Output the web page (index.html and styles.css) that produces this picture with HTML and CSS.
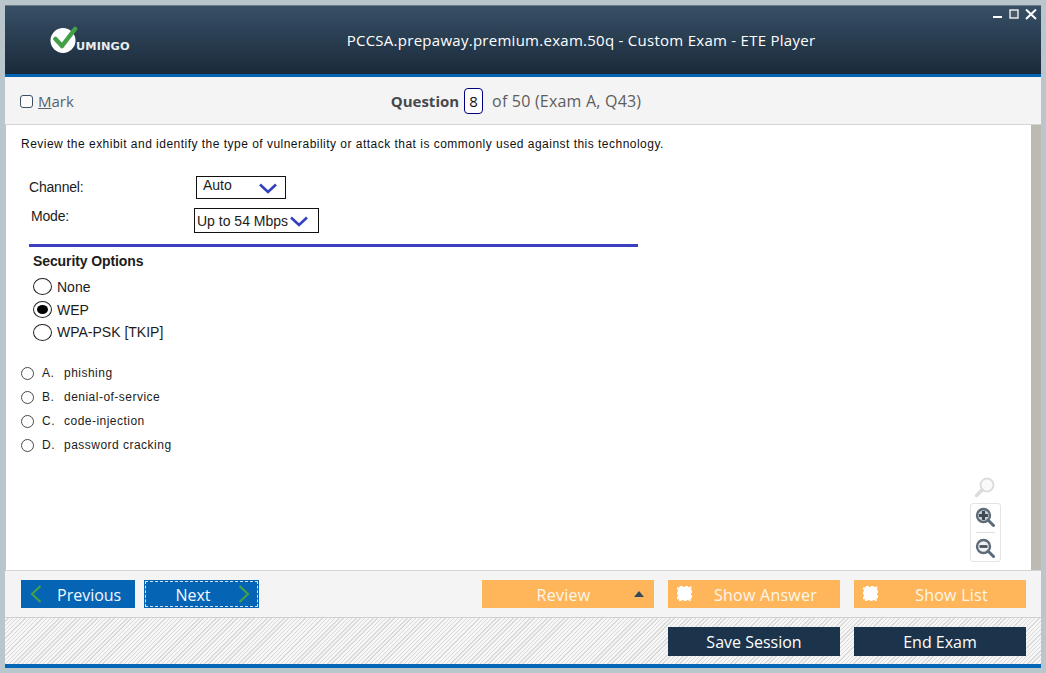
FILE: index.html
```html
<!DOCTYPE html>
<html lang="en">
<head>
<meta charset="utf-8">
<title>ETE Player</title>
<link rel="stylesheet" href="styles.css">
</head>
<body>
<div class="window">
  <header class="titlebar">
    <div class="logo">
      <svg class="logo-mark" width="28" height="28" viewBox="0 0 28 28"><circle cx="13" cy="15.500" r="12.500" fill="#fff"/><path d="M5.500 14 L12 21 L25 4" fill="none" stroke="#43a047" stroke-width="4.500" stroke-linecap="round" stroke-linejoin="round"/></svg>
      <span class="logo-text">UMINGO</span>
    </div>
    <div class="title">PCCSA.prepaway.premium.exam.50q - Custom Exam - ETE Player</div>
    <div class="winctl">
      <svg width="50" height="12" viewBox="0 0 50 12"><rect x="2" y="7" width="9" height="2" fill="#fff"/><rect x="19" y="1" width="8" height="8" fill="#4a5a6a" stroke="#e8e8e8" stroke-width="1.500"/><path d="M35 0.500 L45 10 M45 0.500 L35 10" stroke="#fff" stroke-width="2" fill="none"/></svg>
    </div>
  </header>

  <div class="markbar">
    <label class="mark"><span class="markbox"></span><span><u>M</u>ark</span></label>
    <div class="qnum"><b>Question</b><span class="qbox">8</span><span class="qrest">of 50 (Exam A, Q43)</span></div>
  </div>

  <main class="content">
    <div class="scroll">
      <p class="stem">Review the exhibit and identify the type of vulnerability or attack that is commonly used against this technology.</p>
      <div class="exhibit">
        <div class="ex-row ex-channel">
          <span class="ex-label">Channel:</span>
          <span class="ex-select ex-auto">Auto<svg class="chev" width="20" height="11" viewBox="0 0 20 11"><path d="M2 1.500 L10 9 L18 1.500" fill="none" stroke="#3340c0" stroke-width="2.600"/></svg></span>
        </div>
        <div class="ex-row ex-mode">
          <span class="ex-label">Mode:</span>
          <span class="ex-select ex-up">Up to 54 Mbps<svg class="chev" width="20" height="11" viewBox="0 0 20 11"><path d="M2 1.500 L10 9 L18 1.500" fill="none" stroke="#3340c0" stroke-width="2.600"/></svg></span>
        </div>
        <div class="ex-rule"></div>
        <div class="ex-head">Security Options</div>
        <div class="ex-radios">
          <div class="ex-radio"><span class="ex-dot"></span>None</div>
          <div class="ex-radio"><span class="ex-dot on"></span>WEP</div>
          <div class="ex-radio ex-last"><span class="ex-dot"></span>WPA-PSK [TKIP]</div>
        </div>
      </div>
      <ul class="answers">
        <li><span class="rb"></span><span class="let">A.</span>phishing</li>
        <li><span class="rb"></span><span class="let">B.</span>denial-of-service</li>
        <li><span class="rb"></span><span class="let">C.</span>code-injection</li>
        <li><span class="rb"></span><span class="let">D.</span>password cracking</li>
      </ul>
    </div>
    <div class="zoomtools">
      <svg class="zoom-off" width="22" height="22" viewBox="0 0 22 22"><circle cx="13" cy="9" r="6.500" fill="#fafafa" stroke="#dcdcdc" stroke-width="2"/><path d="M8 14 L2.500 19.500" stroke="#dcdcdc" stroke-width="3.500" stroke-linecap="round"/></svg>
      <div class="zoom-box">
        <svg width="20" height="20" viewBox="0 0 20 20"><circle cx="8.500" cy="8.500" r="6.500" fill="#cfd4d8" stroke="#5d6b78" stroke-width="2.400"/><path d="M13 13 L18.500 18.500" stroke="#5d6b78" stroke-width="3" stroke-linecap="round"/><path d="M4 8.500 H13 M8.500 4 V13" stroke="#3f4a55" stroke-width="3.200"/></svg>
        <i class="zoom-sep"></i>
        <svg width="20" height="20" viewBox="0 0 20 20"><circle cx="8.500" cy="8.500" r="6.500" fill="#eef0f1" stroke="#5d6b78" stroke-width="2.400"/><path d="M13 13 L18.500 18.500" stroke="#5d6b78" stroke-width="3" stroke-linecap="round"/><path d="M4.500 8.500 H12.500" stroke="#47535f" stroke-width="2.800"/></svg>
      </div>
    </div>
    <div class="scrollbar"></div>
  </main>

  <div class="toolbar">
    <div class="nav">
      <button class="btn blue prev"><svg width="12" height="18" viewBox="0 0 12 18"><path d="M10.500 1 L2 9 L10.500 17" fill="none" stroke="#43a047" stroke-width="2.200"/></svg><span>Previous</span></button>
      <button class="btn blue next"><span>Next</span><svg width="12" height="18" viewBox="0 0 12 18"><path d="M1.500 1 L10 9 L1.500 17" fill="none" stroke="#43a047" stroke-width="2.200"/></svg></button>
    </div>
    <div class="actions">
      <button class="btn orange wide review"><span>Review</span><i class="tri"></i></button>
      <button class="btn orange wide check"><i class="cb"></i><span>Show Answer</span></button>
      <button class="btn orange wide check"><i class="cb"></i><span>Show List</span></button>
    </div>
  </div>

  <div class="sessionbar">
    <button class="btn navy wide">Save Session</button>
    <button class="btn navy wide">End Exam</button>
  </div>
</div>
</body>
</html>
```
FILE: styles.css
```css
* { box-sizing: border-box; }
html, body { margin: 0; height: 100%; }
body {
  width: 1046px;
  height: 673px;
  overflow: hidden;
  background: #b9c7cd;
  padding: 5px 5px 4px 5px;
  font-family: "Liberation Sans", Arial, sans-serif;
}
.window {
  width: 1036px;
  height: 663px;
  display: flex;
  flex-direction: column;
  background: #fff;
}
.titlebar {
  height: 72px;
  flex: none;
  display: flex;
  align-items: flex-start;
  position: relative;
  background: linear-gradient(#384f66, #1a2a3a);
  border-top: 1px solid #6d7b85;
  border-bottom: 3px solid #0563b4;
  color: #fff;
}
.logo {
  position: absolute;
  left: 45px;
  top: 19px;
  display: flex;
  align-items: flex-end;
}
.logo-mark { display: block; }
.logo-text {
  margin-left: -2px;
  margin-bottom: 1px;
  font: bold 10px/10px "DejaVu Sans", sans-serif;
  letter-spacing: 0.1px;
  color: #e8edf0;
  transform: scaleX(1.13);
  transform-origin: left;
}
.title {
  width: 100%;
  text-align: center;
  margin-top: 25px;
  font: 15px/18px "Open Sans", sans-serif;
  letter-spacing: 0.27px;
  padding-left: 116px;
}
.winctl { position: absolute; right: 0; top: 3px; line-height: 0; }
.markbar {
  height: 48px;
  flex: none;
  display: flex;
  align-items: center;
  justify-content: center;
  position: relative;
  background: #f4f4f4;
  border-bottom: 1px solid #d4d4d4;
  color: #4f5760;
  font: 16px/20px "Open Sans", sans-serif;
}
.mark {
  position: absolute;
  left: 15px;
  top: 14px;
  display: flex;
  align-items: center;
  gap: 5px;
  font-size: 15px;
  color: #56626e;
}
.markbox {
  width: 13px;
  height: 13px;
  border: 1px solid #3c4f63;
  border-radius: 3px;
  background: #fbfbfb;
}
.qnum { display: flex; align-items: center; margin-right: 14px; color: #5d5d5d; }
.qnum b { color: #45494e; font-weight: 700; font-size: 15px; }
.qrest { letter-spacing: 0.2px; }
.qbox {
  width: 19px;
  height: 26px;
  margin: 0 9px 0 5px;
  border: 1px solid #000080;
  border-radius: 4px;
  background: #fff;
  color: #111;
  text-align: center;
  line-height: 24px;
  font-size: 15px;
}
.content {
  height: 445px;
  flex: none;
  display: flex;
  position: relative;
  border-left: 1px solid #b9c7cd;
}
.scroll { flex: 1; padding: 12px 0 0 15px; color: #111; }
.scrollbar { width: 10px; background: #bdbab4; }
.stem { margin: 0; font-size: 12px; line-height: 14px; letter-spacing: 0.48px; }
.exhibit { width: 622px; padding: 25px 0 0 8px; font-size: 14px; color: #1c1c1c; }
.ex-row { display: flex; }
.ex-channel { height: 22px; }
.ex-mode { height: 36px; margin-top: 10px; }
.ex-label { line-height: 15px; letter-spacing: -0.2px; }
.ex-channel .ex-label { width: 167px; padding-top: 4px; }
.ex-mode .ex-label { width: 165px; padding-left: 2px; padding-top: 1px; }
.ex-select {
  display: flex;
  align-items: center;
  border: 1px solid #111;
  background: #fff;
}
.ex-auto { width: 90px; height: 23px; padding: 0 0 5px 6px; }
.ex-auto .chev { margin-left: 26px; margin-top: 7px; }
.ex-up { width: 125px; height: 25px; padding-left: 2px; }
.ex-up .chev { margin-left: 1px; margin-top: 1px; }
.ex-rule { height: 3px; width: 609px; margin-top: 0; background: #3a40c0; }
.ex-head { font-weight: 700; margin: 6px 0 0 4px; line-height: 16px; letter-spacing: -0.1px; }
.ex-radios { margin-top: 6px; }
.ex-radio { display: flex; align-items: center; margin-left: 4px; height: 23px; line-height: 16px; gap: 5px; }
.ex-last { height: 22px; }
.ex-dot {
  width: 19px;
  height: 17px;
  border: 1px solid #222;
  border-radius: 50%;
  background: #fff;
  position: relative;
  flex: none;
}
.ex-dot.on::after {
  content: "";
  position: absolute;
  left: 3px;
  top: 3px;
  width: 11px;
  height: 9px;
  border-radius: 50%;
  background: #000;
}
.answers { list-style: none; margin: 18px 0 0; padding: 0; font-size: 12px; color: #1c1c1c; }
.answers li { display: flex; align-items: center; height: 24px; letter-spacing: 0.48px; }
.rb {
  width: 13px;
  height: 13px;
  border: 1px solid #4a4a4a;
  border-radius: 50%;
  background: #fff;
  margin-right: 8px;
}
.let { width: 22px; }
.zoomtools {
  position: absolute;
  left: 963px;
  top: 351px;
  width: 32px;
  display: flex;
  flex-direction: column;
  align-items: center;
}
.zoom-box {
  width: 31px;
  height: 59px;
  margin-top: 5px;
  border: 1px solid #e4e4e4;
  border-radius: 3px;
  display: flex;
  flex-direction: column;
  align-items: center;
  justify-content: space-between;
  padding: 3px 0 3px;
  background: #fff;
}
.zoom-sep { width: 19px; height: 1px; background: #dedede; }
.toolbar {
  height: 48px;
  flex: none;
  display: flex;
  justify-content: space-between;
  align-items: flex-start;
  padding: 9px 15px 0 16px;
  background: #f4f4f4;
  border-top: 1px solid #d4d4d4;
  border-bottom: 1px solid #d0d0d0;
}
.nav, .actions { display: flex; }
.nav { gap: 9px; }
.actions { gap: 14px; }
.btn {
  height: 28px;
  border: 0;
  padding: 0;
  display: flex;
  align-items: center;
  color: #fff;
  font: 16px/20px "Open Sans", sans-serif;
  position: relative;
}
.toolbar .btn span { padding-top: 2px; }
.blue { width: 114px; background: #0664b4; color: #f2f8ff; }
.next { width: 115px; }
.prev { padding-left: 9px; }
.prev span { margin-left: 15px; }
.next { justify-content: center; outline: 1px dashed #d0e2f2; outline-offset: -2px; }
.next svg { position: absolute; right: 9px; top: 5px; }
.next span { margin-right: 17px; }
.wide { width: 172px; justify-content: center; }
.orange { background: #ffb65a; color: #fdf7ec; letter-spacing: 0.25px; }
.check span { margin-left: 23px; }
.review span { margin-right: 9px; }
.tri {
  position: absolute;
  right: 10px;
  top: 11px;
  border-left: 5px solid transparent;
  border-right: 5px solid transparent;
  border-bottom: 6px solid #34495e;
}
.cb {
  position: absolute;
  left: 10px;
  top: 7px;
  width: 13px;
  height: 13px;
  background: #fff;
  border-radius: 2px;
  outline: 1px dashed #fff;
}
.sessionbar {
  height: 50px;
  flex: none;
  display: flex;
  justify-content: flex-end;
  gap: 14px;
  padding: 9px 15px 0 0;
  background: repeating-linear-gradient(135deg, #f6f6f6 0, #f6f6f6 2px, #dadada 2px, #dadada 3px);
  border-bottom: 4px solid #0666b6;
}
.navy { height: 29px; background: #1c344b; color: #fff; }
```
